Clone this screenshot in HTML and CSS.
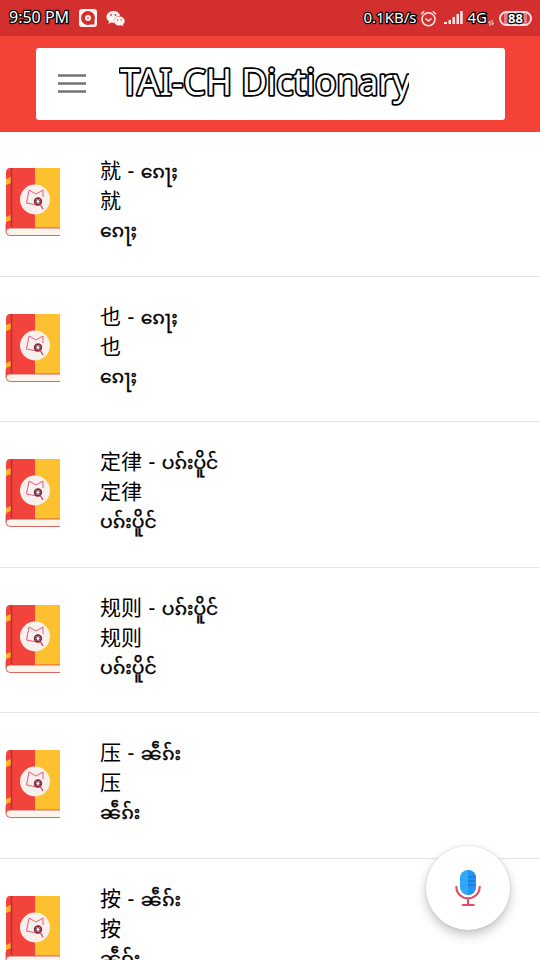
FILE: index.html
```html
<!DOCTYPE html>
<html lang="zh">
<head>
<meta charset="utf-8">
<title>TAI-CH Dictionary</title>
<link rel="stylesheet" href="styles.css">
</head>
<body>
<svg width="0" height="0" class="defs">
  <symbol id="book" viewBox="0 0 56 70">
    <path d="M5 1H31V62H1V6Q1 1 5 1Z" fill="#f2443d"/>
    <path d="M30 1H55V62H30Z" fill="#fdc02f"/>
    <path d="M1 12L6 10V16L1 18ZM1 50L6 48V53L1 55Z" fill="#fdb52b"/>
    <path d="M6.500 1V60" stroke="#bd2d2e" stroke-width="1.500"/>
    <path d="M55 61H5Q1 61 1 64.500T5 68.500H55Z" fill="#fff4ea"/>
    <path d="M55 61H5Q1 61 1 64.500T5 68.500H55M1 64V57" fill="none" stroke="#cf4240" stroke-width=".8"/>
    <circle cx="30" cy="32.500" r="15" fill="#f8f0ec"/>
    <path d="M32 38L21.500 36 24 23 31 27 38 23V30" fill="none" stroke="#e5476c" stroke-width=".9"/>
    <circle cx="33" cy="34.500" r="3.300" fill="#fff" stroke="#8c263c" stroke-width="1.800"/>
    <circle cx="33" cy="34.500" r="1.900" fill="#fff" stroke="#35282d" stroke-width=".8"/>
    <path d="M35 37L38 42" stroke="#d43557" stroke-width="1.300"/>
  </symbol>
</svg>
<header>
  <div class="status">
    <span class="time">9:50 PM</span>
    <svg class="rec" width="18" height="18" viewBox="0 0 18 18"><rect width="18" height="18" rx="3" fill="#fff4f1"/><circle cx="9" cy="9" r="5" fill="none" stroke="#d32f2f" stroke-width="4"/><path d="M10 12H15.500V15.500H12Z" fill="#d32f2f"/><circle cx="9" cy="9" r="1.200" fill="#d32f2f" opacity=".5"/></svg>
    <svg class="wechat" width="19" height="17" viewBox="0 0 19 17"><path d="M7.500 1C3.500 1 .5 3.600.5 7c0 2 1 3.400 2.600 4.500L2.500 14l2.700-1.500 3 .4C7 8.500 10 5.800 14.300 5.900 13.600 3 11 1 7.500 1Z" fill="#fff4f1"/><path d="M13.300 6.600c-3 0-5.300 2-5.300 4.500s2.300 4.500 5.300 4.500l2-.3 2 1-.5-1.800c1.200-.8 1.900-2 1.900-3.400 0-2.500-2.400-4.500-5.400-4.500Z" fill="#fff4f1"/><g fill="#d32f2f"><circle cx="5" cy="5" r=".9"/><circle cx="9.500" cy="5" r=".9"/><circle cx="11.500" cy="10" r=".7"/><circle cx="15.200" cy="10" r=".7"/></g></svg>
    <span class="speed">0.1KB/s</span>
    <svg class="alarm" width="17" height="17" viewBox="0 0 17 17" fill="none" stroke="#ffe7e4" stroke-width="1.500"><circle cx="8.500" cy="9.300" r="6.500"/><path d="M5.500 8.500L8.500 11 11.500 8.500M1 4.300L4.200 1.300M16 4.300L12.800 1.300"/></svg>
    <svg class="signal" width="19" height="15" viewBox="0 0 19 15" fill="#ffe7e4"><path d="M0 12H3V14H0ZM4.500 10H7V14H4.500ZM8.500 7H11V14H8.500ZM12.500 4H15V14H12.500ZM16.200 1H18.700V14H16.200Z"/></svg>
    <span class="net">4G</span>
    <svg class="updown" width="6" height="6" viewBox="0 0 6 6" fill="none" stroke="#ffd3d0"><path d="M2 6V1L.3 3M4.200 0V5L5.800 3"/></svg>
    <span class="battery"><b>88</b></span>
  </div>
  <div class="bar">
    <svg class="menu" width="28" height="20" viewBox="0 0 28 20"><path d="M0 1.500H28M0 9.500H28M0 17.500H28" stroke="#757575" stroke-width="2.600"/></svg>
    <h1><svg width="290" height="50"><text x="1" y="34" textLength="291" lengthAdjust="spacingAndGlyphs">TAI-CH Dictionary</text></svg></h1>
  </div>
</header>
<main>
  <article><svg class="book"><use href="#book"/></svg><div class="entry"><p>就 - <span lang="shn">ၵေႃႈ</span></p><p>就</p><p lang="shn">ၵေႃႈ</p></div></article>
  <article><svg class="book"><use href="#book"/></svg><div class="entry"><p>也 - <span lang="shn">ၵေႃႈ</span></p><p>也</p><p lang="shn">ၵေႃႈ</p></div></article>
  <article><svg class="book"><use href="#book"/></svg><div class="entry"><p>定律 - <span lang="shn">ပၵ်းပိူင်</span></p><p>定律</p><p lang="shn">ပၵ်းပိူင်</p></div></article>
  <article><svg class="book"><use href="#book"/></svg><div class="entry"><p>规则 - <span lang="shn">ပၵ်းပိူင်</span></p><p>规则</p><p lang="shn">ပၵ်းပိူင်</p></div></article>
  <article><svg class="book"><use href="#book"/></svg><div class="entry"><p>压 - <span lang="shn">ၼဵၵ်း</span></p><p>压</p><p lang="shn">ၼဵၵ်း</p></div></article>
  <article><svg class="book"><use href="#book"/></svg><div class="entry"><p>按 - <span lang="shn">ၼဵၵ်း</span></p><p>按</p><p lang="shn">ၼဵၵ်း</p></div></article>
</main>
<button class="mic" aria-label="Voice search">
  <svg width="26" height="38" viewBox="0 0 26 38"><rect x="5" y="1" width="16" height="25" rx="8" fill="#2fa8fa"/><path d="M13 1a8 8 0 0 1 8 8v9a8 8 0 0 1-8 8Z" fill="#2394f2"/><path d="M13 8H20M13 12H20M13 16H20" stroke="#1769c7"/><path d="M1.300 17v1a11.700 11.300 0 0 0 23.400 0v-1M13 29.500V36M7 36H19.500" fill="none" stroke="#e84862" stroke-width="2"/></svg>
</button>
</body>
</html>
```
FILE: styles.css
```css
* { box-sizing: border-box; }
body { margin: 0; height: 960px; overflow: hidden; position: relative; background: #fff; color: #000; font-family: "Noto Sans", "Noto Sans CJK SC", "Noto Sans Myanmar", sans-serif; }
.defs { position: absolute; }
header { height: 132px; background: #f44336; }
.status { height: 36px; display: flex; align-items: center; padding: 0 8px 0 9px; background: #d32f2f; color: #fff; font-size: 16px; line-height: 34px; white-space: nowrap; }
.status span { paint-order: stroke fill; -webkit-text-stroke: 2.500px #000; }
.status span.time, .status span.speed, .status span.net { margin-top: -2px; }
.time { width: 70px; }
.rec { flex: none; }
.wechat { margin-left: 9px; }
.speed { margin-left: auto; font-size: 15px; }
.alarm { margin-left: 4px; }
.signal { margin-left: 7px; margin-top: -1px; }
.net { margin-left: 4px; font-size: 15px; }
.updown { margin: 9px 5px 0 1px; }
.battery { display: flex; align-items: center; justify-content: center; width: 33px; height: 15px; border: 2px solid #ffe0df; border-radius: 8px; background: linear-gradient(90deg, #d32f2f 3px, #ed7881 3px, #ed7881 26px, #d32f2f 26px); font-size: 13px; line-height: 15px; }
.bar { width: 469px; height: 72px; margin: 12px 35px 0 36px; padding-left: 22px; display: flex; align-items: center; background: #fff; border-radius: 3px; }
.menu { flex: none; margin-top: -1px; }
h1 { margin: 3px 0 0 33px; height: 50px; font-size: 36px; font-weight: 400; }
h1 svg { display: block; overflow: hidden; }
h1 text { fill: #fff; stroke: #000; stroke-width: 3.600px; stroke-linejoin: round; paint-order: stroke; }
main { margin-top: -1px; }
article { height: 145.500px; display: flex; border-bottom: 1px solid #e4e4e4; }
.book { width: 56px; height: 70px; margin: 36px 0 0 5px; flex: none; }
.entry { margin: 24px 0 0 39px; font-size: 21px; line-height: 30px; }
.entry p { margin: 0; height: 30px; white-space: nowrap; word-spacing: 1px; }
.entry [lang="shn"] { font-size: 18.800px; -webkit-text-stroke: .4px #000; }
.mic { position: absolute; left: 426px; top: 846px; width: 84px; height: 84px; padding: 0; border: 0; border-radius: 50%; background: #fff; box-shadow: 0 5px 11px rgba(0,0,0,.23), 0 0 3px rgba(0,0,0,.12); display: flex; align-items: center; justify-content: center; }
```
